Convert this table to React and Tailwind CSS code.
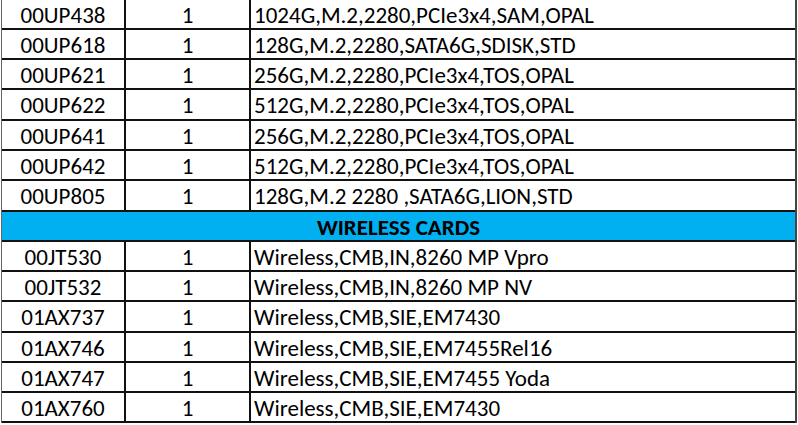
import React from "react";

const top = [
  ["00UP438", "1024G,M.2,2280,PCIe3x4,SAM,OPAL", "h-[30px]"],
  ["00UP618", "128G,M.2,2280,SATA6G,SDISK,STD", "h-[30px]"],
  ["00UP621", "256G,M.2,2280,PCIe3x4,TOS,OPAL", "h-[30px]"],
  ["00UP622", "512G,M.2,2280,PCIe3x4,TOS,OPAL", "h-[31px]"],
  ["00UP641", "256G,M.2,2280,PCIe3x4,TOS,OPAL", "h-[30px]"],
  ["00UP642", "512G,M.2,2280,PCIe3x4,TOS,OPAL", "h-[30px]"],
  ["00UP805", "128G,M.2 2280 ,SATA6G,LION,STD", "h-[31px]"],
];

const bottom = [
  ["00JT530", "Wireless,CMB,IN,8260 MP Vpro", "h-[30px]"],
  ["00JT532", "Wireless,CMB,IN,8260 MP NV", "h-[30px]"],
  ["01AX737", "Wireless,CMB,SIE,EM7430", "h-[31px]"],
  ["01AX746", "Wireless,CMB,SIE,EM7455Rel16", "h-[30px]"],
  ["01AX747", "Wireless,CMB,SIE,EM7455 Yoda", "h-[30px]"],
  ["01AX760", "Wireless,CMB,SIE,EM7430", "h-[30px]"],
];

function Row({ part, desc, h }) {
  return (
    <div className={`flex border-b-2 border-[#111] ${h}`}>
      <div className="w-[124px] shrink-0 border-r-2 border-[#111] flex items-center justify-center pt-[2px]">
        {part}
      </div>
      <div className="w-[125px] shrink-0 border-r-2 border-[#111] flex items-center justify-center pt-[2px]">
        1
      </div>
      <div className="flex-1 flex items-center pl-[3px] pt-[2px] whitespace-nowrap">
        {desc}
      </div>
    </div>
  );
}

export default function App() {
  return (
    <div className="w-[798px] h-[425px] bg-white">
      <div
        className="ml-[1px] w-[796px] border-l border-l-[#666] border-r-2 border-r-[#444] text-black text-[23px] leading-none"
        style={{ fontFamily: "Carlito, Lato, 'Open Sans', sans-serif" }}
      >
        {top.map(([p, d, h]) => (
          <Row key={p} part={p} desc={d} h={h} />
        ))}
        <div className="h-[30px] bg-[#00b0f0] border-b-2 border-[#111] flex items-center justify-center font-bold pt-[2px]">
          WIRELESS CARDS
        </div>
        {bottom.map(([p, d, h]) => (
          <Row key={p} part={p} desc={d} h={h} />
        ))}
      </div>
    </div>
  );
}
